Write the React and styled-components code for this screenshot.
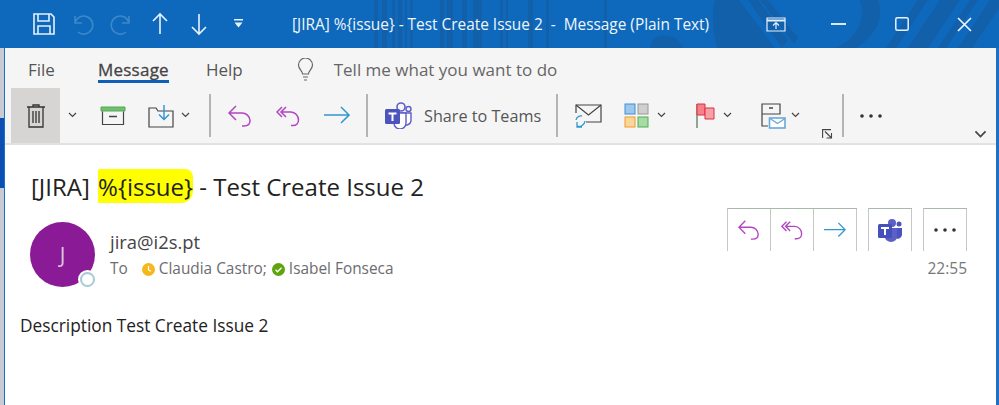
import React from 'react'
import styled, { createGlobalStyle } from 'styled-components'

const Global = createGlobalStyle`
    html, body { margin: 0; padding: 0; background: #fff; }
    body { font-family: "Open Sans", "Noto Sans", sans-serif; }
`

const Window = styled.div`
    width: 999px;
    height: 405px;
    background: #fff;
    overflow: hidden;
`

const TitleBar = styled.div`
    position: relative;
    height: 48px;
    background: #0e69bc;
    display: flex;
    align-items: center;
    color: #fff;
    overflow: hidden;
`

const Stripes = styled.svg`
    position: absolute;
    left: 0;
    top: 0;
`

const TitleSlot = styled.div`
    position: relative;
    width: ${p => p.$w}px;
    margin-left: ${p => p.$ml || 0}px;
    display: flex;
    justify-content: center;
    align-items: center;
    flex: none;
`

const TitleText = styled.div`
    position: relative;
    margin-left: 41px;
    padding-top: 1px;
    width: 440px;
    flex: none;
    font-size: 15.4px;
    white-space: pre;
    color: #eef5fb;
`

const Below = styled.div`
    display: flex;
    height: 357px;
`

const Backdrop = styled.div`
    flex: none;
    width: 4px;
    display: flex;
    flex-direction: column;
    background: #c9cbd2;
`

const BackdropBlue = styled.div`
    height: 70px;
    margin-top: 70px;
    background: #0b4fb4;
`

const Main = styled.div`
    flex: 1;
    min-width: 0;
    border-left: 1px solid #1f6fc8;
    border-right: 3px solid #1f6fc8;
    background: #fff;
`

const Ribbon = styled.div`
    height: 97px;
    box-sizing: border-box;
    background: #f6f5f6;
    border-bottom: 2px solid #e2e2e0;
`

const TabRow = styled.div`
    height: 40px;
    padding-top: 3px;
    box-sizing: border-box;
    display: flex;
    align-items: center;
    padding-left: 23px;
    color: #555;
    font-size: 17px;
`

const Tab = styled.div`
    position: relative;
    margin-right: ${p => p.$mr}px;
    color: ${p => (p.$active ? '#444' : '#555')};
    ${p => p.$active && `
        -webkit-text-stroke: 0.3px #444;
        letter-spacing: 0.25px;
        &:after {
            content: "";
            position: absolute;
            left: 0;
            right: 0;
            bottom: -2px;
            height: 3px;
            background: #0f5fb8;
        }
    `}
`

const Tell = styled.div`
    margin-left: 20px;
    font-size: 17px;
    color: #666;
`

const ToolRow = styled.div`
    height: 55px;
    display: flex;
    padding-left: 6px;
    align-items: center;
`

const Slot = styled.div`
    flex: none;
    width: ${p => p.$w}px;
    height: ${p => (p.$tall ? '55px' : 'auto')};
    margin-left: ${p => p.$ml || 0}px;
    display: flex;
    align-items: center;
    justify-content: center;
    background: ${p => (p.$selected ? '#d6d5d4' : 'transparent')};
    align-self: ${p => (p.$low ? 'flex-end' : 'center')};
    padding-bottom: ${p => p.$pb || 0}px;
`

const Sep = styled.div`
    flex: none;
    width: 2px;
    height: 43px;
    margin-left: ${p => p.$ml || 0}px;
    background: #b7b3b3;
`

const ShareButton = styled.div`
    flex: none;
    width: 188px;
    padding-left: 17px;
    box-sizing: border-box;
    display: flex;
    align-items: center;
    gap: 12px;
    font-size: 16.2px;
    color: #555;
`

const Collapse = styled(Slot)`
    margin-left: auto;
    margin-right: 8px;
`

const Subject = styled.h1`
    margin: 26px 0 0 26px;
    height: 32px;
    font-size: 24px;
    line-height: 32px;
    font-weight: 400;
    color: #222;
    white-space: pre;
`

const Mark = styled.span`
    background: #ffff00;
    margin-left: 2px;
    border-radius: 2px 8px 12px 1px;
    padding: 1px 0 0;
`

const Header = styled.div`
    display: flex;
    margin-top: 16px;
    padding-left: 25px;
    height: 72px;
`

const Avatar = styled.div`
    position: relative;
    flex: none;
    width: 65px;
    height: 65px;
    margin-top: 3px;
    border-radius: 50%;
    background: #8a1a96;
    color: #d9c6dd;
    font-size: 21px;
    display: flex;
    align-items: center;
    justify-content: center;
`

const Presence = styled.div`
    position: absolute;
    right: -2px;
    bottom: -2px;
    width: 19px;
    height: 19px;
    box-sizing: border-box;
    border-radius: 50%;
    background: #fff;
    padding: 2px;
    &:after {
        content: "";
        display: block;
        width: 15px;
        height: 15px;
        box-sizing: border-box;
        border: 2px solid #a9c9d4;
        border-radius: 50%;
    }
`

const Who = styled.div`
    margin-left: 15px;
    margin-top: 9px;
`

const Sender = styled.div`
    font-size: 18.4px;
    line-height: 28px;
    color: #444;
`

const ToLine = styled.div`
    display: flex;
    align-items: center;
    margin-top: 3px;
    font-size: 15.4px;
    line-height: 20px;
    color: #6c6c70;
    white-space: pre;
`

const Dot = styled.span`
    width: 13px;
    height: 13px;
    margin-right: 4px;
    margin-left: ${p => p.$ml}px;
    flex: none;
    display: inline-flex;
`

const Actions = styled.div`
    margin-left: auto;
    margin-right: 29px;
    margin-top: -11px;
    display: flex;
    flex-direction: column;
    align-items: flex-end;
`

const ActionRow = styled.div`
    display: flex;
    gap: 11px;
`

const ActionGroup = styled.div`
    display: flex;
    height: 43px;
    box-sizing: border-box;
    border-top: 1px solid #a9b9a9;
    border-left: 1px solid #c4c9c4;
`

const ActionButton = styled.div`
    width: 43px;
    box-sizing: border-box;
    border-right: 1px solid #c4c9c4;
    display: flex;
    align-items: center;
    justify-content: center;
`

const Time = styled.div`
    margin-top: 7px;
    font-size: 15.5px;
    line-height: 20px;
    color: #777;
`

const Body = styled.div`
    margin: 23px 0 0 15px;
    font-size: 17.3px;
    line-height: 24px;
    color: #222;
`

const Save = () => (
    <svg width="24" height="24" viewBox="0 0 24 24" fill="none" stroke="#e6f0fa" strokeWidth="1.6">
        <path d="M2 2h17l3 3v17H2z" />
        <path d="M6 2v7h11V2M6 22v-8h12v8" />
    </svg>
)

const Undo = ({ flip }) => (
    <svg width="24" height="24" viewBox="0 0 24 24" fill="none" stroke="#3d88c9" strokeWidth="1.6" style={flip ? { transform: 'scaleX(-1)' } : undefined}>
        <path d="M4 4v7h7M4 11a9 9 0 1 1 3 9" />
    </svg>
)

const Vert = ({ down }) => (
    <svg width="18" height="24" viewBox="0 0 18 24" fill="none" stroke="#eaf3fb" strokeWidth="1.6" style={down ? { transform: 'scaleY(-1)' } : undefined}>
        <path d="M9 22V2M2 9l7-7 7 7" />
    </svg>
)

const QuickCaret = () => (
    <svg width="12" height="10" viewBox="0 0 12 10" fill="#eaf3fb">
        <path d="M1 0h9v1.4H1zM1.5 3.5h8L5.500 8.500z" />
    </svg>
)

const DisplayOptions = () => (
    <svg width="20" height="15" viewBox="0 0 20 15" fill="none" stroke="#e6f0fa" strokeWidth="1.2">
        <path d="M1 1h18v13H1z" />
        <path d="M1 3.500h18" strokeWidth="2" />
        <path d="M10 12V6M7 8.500l3-3 3 3" />
    </svg>
)

const Bulb = () => (
    <svg width="17" height="24" viewBox="0 0 17 24" fill="none" stroke="#666" strokeWidth="1.2">
        <path d="M5.500 16c0-3-4-5-4-9a7 7 0 0 1 14 0c0 4-4 6-4 9z" />
        <path d="M6 19h5M7 22h3" />
    </svg>
)

const Chev = ({ size = 9, color = '#444' }) => (
    <svg width={size} height={size * 0.67} viewBox="0 0 9 6" fill="none" stroke={color} strokeWidth="1.2">
        <path d="M1 1l3.500 3.500L8 1" />
    </svg>
)

const Trash = () => (
    <svg width="20" height="24" viewBox="0 0 20 24" fill="none" stroke="#333" strokeWidth="1.3">
        <path d="M1 3h18M7 3V1h6v2M3 3v20h14V3M7 7v12M10 7v12M13 7v12" />
    </svg>
)

const Archive = () => (
    <svg width="26" height="20" viewBox="0 0 26 20" fill="none">
        <path d="M1 1h24v4H1z" fill="#6fbf6f" stroke="#58a858" />
        <path d="M2.500 5.500v13h21v-13" stroke="#444" strokeWidth="1.2" />
        <path d="M9 10.500h8" stroke="#444" strokeWidth="1.5" />
    </svg>
)

const Move = () => (
    <svg width="26" height="24" viewBox="0 0 26 24" fill="none">
        <path d="M1 23V4h7l2 3h15v16z" stroke="#444" strokeWidth="1.2" />
        <path d="M16 1v14M11 10.500l5 5 5-5" stroke="#2b93d6" strokeWidth="1.4" />
    </svg>
)

const Reply = ({ size = 24 }) => (
    <svg width={size} height={size} viewBox="0 0 24 24" fill="none" stroke="#b245c0" strokeWidth="1.5">
        <path d="M8 2L1 9l7 7M1 9h13a8 8 0 0 1 8 7.500c0 3-2 5.500-6 5.500h-2" />
    </svg>
)

const ReplyAll = ({ size = 24 }) => (
    <svg width={size} height={size} viewBox="0 0 24 24" fill="none" stroke="#b245c0" strokeWidth="1.5">
        <path d="M6 3L1 8l5 5M10 3L5 8l5 5M5 8h10a8 8 0 0 1 7.500 8c0 3-2 5.500-5.500 5.500h-2" />
    </svg>
)

const Forward = ({ size = 26 }) => (
    <svg width={size} height={size * 0.7} viewBox="0 0 26 18" fill="none" stroke="#2f97cf" strokeWidth="1.5">
        <path d="M0 9h25M17 1l8 8-8 8" />
    </svg>
)

const Teams = ({ size = 27 }) => (
    <svg width={size} height={size} viewBox="0 0 27 27">
        <circle cx="16" cy="5" r="4" fill="none" stroke="#5b5fc7" strokeWidth="1.6" />
        <circle cx="23.500" cy="7" r="2.500" fill="none" stroke="#5b5fc7" strokeWidth="1.400" />
        <path d="M16 11h10v8a5 5 0 0 1-8 3z" fill="#fff" stroke="#5b5fc7" strokeWidth="1.400" />
        <path d="M9 11h12v10a6 6 0 0 1-12 0z" fill="#fff" stroke="#5b5fc7" strokeWidth="1.400" />
        <rect x="0" y="7" width="15" height="15" rx="1.500" fill="#4b53bc" />
        <path d="M3.500 10.500h8v2h-3V19h-2v-6.500h-3z" fill="#fff" />
    </svg>
)

const TeamsSolid = () => (
    <svg width="24" height="24" viewBox="0 0 24 24">
        <circle cx="14" cy="5" r="4" fill="#5b5fc7" />
        <circle cx="21" cy="6" r="2.500" fill="#4b53bc" />
        <path d="M15 10h9v7a4.500 4.500 0 0 1-7 3z" fill="#4b53bc" />
        <path d="M7 10h12v9a6 5 0 0 1-12 0z" fill="#5b5fc7" />
        <rect x="0" y="6" width="14" height="14" rx="1.500" fill="#4650bb" />
        <path d="M3 9h8v2H8v6H6v-6H3z" fill="#fff" />
    </svg>
)

const MailSync = () => (
    <svg width="28" height="25" viewBox="0 0 28 25" fill="none">
        <path d="M2 10V2h25v17H12" stroke="#444" strokeWidth="1.2" />
        <path d="M2 2l12.500 10L27 2" stroke="#444" strokeWidth="1.2" />
        <path d="M2 17a5 5 0 0 1 6-4M11 18a6 6 0 0 1-8 5M3 19v5h5" stroke="#2f97cf" strokeWidth="1.3" />
    </svg>
)

const Categorize = () => (
    <svg width="26" height="26" viewBox="0 0 26 26">
        <rect x="1" y="1" width="10" height="10" fill="#9cc8ee" stroke="#3f8fd8" />
        <rect x="14" y="1" width="10" height="10" fill="#cfcfcf" stroke="#999" />
        <rect x="1" y="14" width="10" height="10" fill="#fbd699" stroke="#ee9a30" />
        <rect x="14" y="14" width="10" height="10" fill="#a6dba6" stroke="#4fae4f" />
    </svg>
)

const Flag = () => (
    <svg width="19" height="26" viewBox="0 0 19 26" fill="none">
        <path d="M1 1v24" stroke="#5c7a5c" strokeWidth="1.300" />
        <path d="M1 1h8v11H1z" fill="#f8808a" stroke="#d93040" />
        <path d="M9 5h9v11H9z" fill="#f8a0a8" stroke="#d93040" />
    </svg>
)

const Rules = () => (
    <svg width="25" height="26" viewBox="0 0 25 26" fill="none">
        <path d="M1 1h18v10H1zM1 11v12h6" stroke="#444" strokeWidth="1.200" />
        <path d="M8 5h4" stroke="#444" strokeWidth="1.500" />
        <rect x="8.500" y="15" width="15.500" height="10" fill="#fff" stroke="#6aa8d8" strokeWidth="1.600" />
        <path d="M9 15.500l7.500 5 7.500-5" stroke="#6aa8d8" strokeWidth="1.400" />
    </svg>
)

const Launcher = () => (
    <svg width="11" height="10" viewBox="0 0 11 10" fill="none" stroke="#444" strokeWidth="1.100">
        <path d="M.6 9V.6H9" />
        <path d="M3 2.500l6 6M9.500 4v5H4.500" />
    </svg>
)

const More = () => (
    <svg width="24" height="4" viewBox="0 0 24 4" fill="#333">
        <circle cx="3" cy="2" r="1.800" />
        <circle cx="12" cy="2" r="1.800" />
        <circle cx="21" cy="2" r="1.800" />
    </svg>
)

const Clock = () => (
    <svg width="13" height="13" viewBox="0 0 13 13">
        <circle cx="6.500" cy="6.500" r="6.500" fill="#f5b71c" />
        <path d="M6.500 3v4l2.500 1.300" fill="none" stroke="#fff" strokeWidth="1.200" />
    </svg>
)

const Check = () => (
    <svg width="13" height="13" viewBox="0 0 13 13">
        <circle cx="6.500" cy="6.500" r="6.500" fill="#5ea50c" />
        <path d="M3.500 6.800l2 2 4-4" fill="none" stroke="#fff" strokeWidth="1.400" />
    </svg>
)

const stripeBands = [
    [374, 4], [382, 5], [392, 3], [398, 4], [405, 2], [410, 3], [440, 4], [447, 6], [462, 5], [473, 9],
    [500, 3], [506, 2], [528, 5], [546, 3], [604, 3],
]

const App = () => {
    return (
        <>
            <Global />
            <Window>
                <TitleBar>
                    <Stripes width="999" height="48" fill="#155a9f" opacity="0.6">
                        {stripeBands.map(([x, w]) => (
                            <rect key={x} x={x} y="0" width={w} height="48" />
                        ))}
                        <path d="M650 48c2-14 14-14 26-10l8 10zM715 0h24l36 48h-58c-4-16-6-32-2-48zM748 0h10l30 40-6 8zM760 0h8l30 38-4 6zM860 0h18c6 16 0 34-22 48h-20c22-10 30-30 24-48z" />
                        <path d="M918 0h10l-32 48h-10zM940 0h20l-32 48h-20zM970 0h8l-32 48h-8zM990 0h9v8l-27 40h-14z" />
                    </Stripes>
                    <TitleSlot $w={24} $ml={32}><Save /></TitleSlot>
                    <TitleSlot $w={24} $ml={15}><Undo /></TitleSlot>
                    <TitleSlot $w={24} $ml={14}><Undo flip /></TitleSlot>
                    <TitleSlot $w={24} $ml={15}><Vert /></TitleSlot>
                    <TitleSlot $w={24} $ml={15}><Vert down /></TitleSlot>
                    <TitleSlot $w={24} $ml={16}><QuickCaret /></TitleSlot>
                    <TitleText>[JIRA] %{'{'}issue{'}'} - Test Create Issue 2  -  Message (Plain Text)</TitleText>
                    <TitleSlot $w={24} $ml={32}><DisplayOptions /></TitleSlot>
                    <TitleSlot $w={16} $ml={42}>
                        <svg width="15" height="2"><rect width="15" height="2" fill="#dbe8f4" /></svg>
                    </TitleSlot>
                    <TitleSlot $w={14} $ml={49}>
                        <svg width="14" height="14" fill="none" stroke="#eaf3fb" strokeWidth="1.500"><rect x=".8" y=".8" width="12.400" height="12.400" rx="1.500" /></svg>
                    </TitleSlot>
                    <TitleSlot $w={15} $ml={48}>
                        <svg width="15" height="15" fill="none" stroke="#f4f8fc" strokeWidth="1.600"><path d="M1 1l13 13M14 1L1 14" /></svg>
                    </TitleSlot>
                </TitleBar>
                <Below>
                    <Backdrop><BackdropBlue /></Backdrop>
                    <Main>
                        <Ribbon>
                            <TabRow>
                                <Tab $mr={43}>File</Tab>
                                <Tab $mr={37} $active>Message</Tab>
                                <Tab $mr={54}>Help</Tab>
                                <Bulb />
                                <Tell>Tell me what you want to do</Tell>
                            </TabRow>
                            <ToolRow>
                                <Slot $w={49} $tall $selected><Trash /></Slot>
                                <Slot $w={24}><Chev /></Slot>
                                <Slot $w={58}><Archive /></Slot>
                                <Slot $w={38}><Move /></Slot>
                                <Slot $w={10}><Chev /></Slot>
                                <Sep $ml={19} />
                                <Slot $w={57}><Reply /></Slot>
                                <Slot $w={40}><ReplyAll /></Slot>
                                <Slot $w={58}><Forward /></Slot>
                                <Sep />
                                <ShareButton><Teams />Share to Teams</ShareButton>
                                <Sep />
                                <Slot $w={60}><MailSync /></Slot>
                                <Slot $w={38}><Categorize /></Slot>
                                <Slot $w={10}><Chev /></Slot>
                                <Slot $w={20} $ml={29}><Flag /></Slot>
                                <Slot $w={10} $ml={7}><Chev /></Slot>
                                <Slot $w={26} $ml={28}><Rules /></Slot>
                                <Slot $w={10} $ml={4}><Chev /></Slot>
                                <Slot $w={14} $ml={20} $low $pb={4}><Launcher /></Slot>
                                <Sep $ml={8} />
                                <Slot $w={30} $ml={12}><More /></Slot>
                                <Collapse $w={16} $low $pb={4}><Chev size={13} /></Collapse>
                            </ToolRow>
                        </Ribbon>
                        <Subject>[JIRA] <Mark>%{'{'}issue{'}'}</Mark> - Test Create Issue 2</Subject>
                        <Header>
                            <Avatar>
                                J
                                <Presence />
                            </Avatar>
                            <Who>
                                <Sender>jira@i2s.pt</Sender>
                                <ToLine>
                                    To
                                    <Dot $ml={14}><Clock /></Dot>
                                    Claudia Castro;
                                    <Dot $ml={5}><Check /></Dot>
                                    Isabel Fonseca
                                </ToLine>
                            </Who>
                            <Actions>
                                <ActionRow>
                                    <ActionGroup>
                                        <ActionButton><Reply size={22} /></ActionButton>
                                        <ActionButton><ReplyAll size={22} /></ActionButton>
                                        <ActionButton><Forward size={22} /></ActionButton>
                                    </ActionGroup>
                                    <ActionGroup>
                                        <ActionButton><TeamsSolid /></ActionButton>
                                    </ActionGroup>
                                    <ActionGroup>
                                        <ActionButton><More /></ActionButton>
                                    </ActionGroup>
                                </ActionRow>
                                <Time>22:55</Time>
                            </Actions>
                        </Header>
                        <Body>Description Test Create Issue 2</Body>
                    </Main>
                </Below>
            </Window>
        </>
    )
}

export default App
